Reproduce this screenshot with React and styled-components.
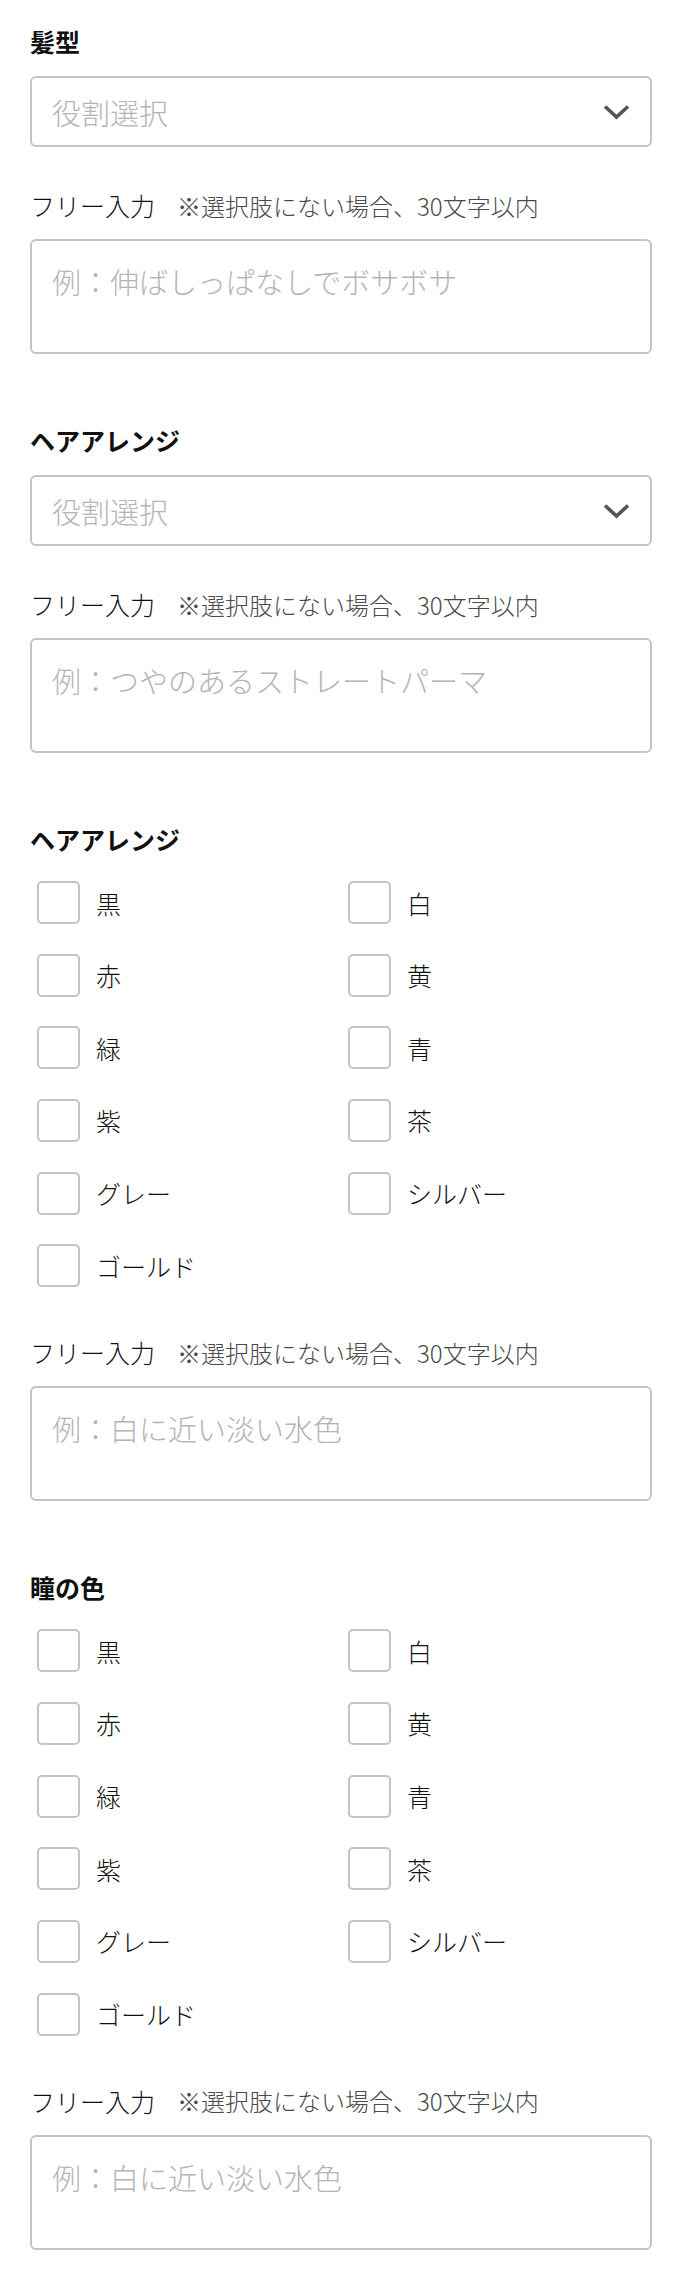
import React from "react";
import styled, { createGlobalStyle } from "styled-components";

const GlobalStyle = createGlobalStyle`
  html, body { margin: 0; padding: 0; background: #fff; }
  body {
    font-family: "Noto Sans CJK JP", "Noto Sans", sans-serif;
    color: #222;
  }
  * { box-sizing: border-box; }
`;

const Page = styled.div`
  width: 682px;
  padding: 23px 30px 29px;
  display: flex;
  flex-direction: column;
  gap: 68px;
`;

const Section = styled.section`
  display: flex;
  flex-direction: column;
`;

const Title = styled.h2`
  margin: 0;
  font-size: 25px;
  line-height: 36px;
  font-weight: 700;
  color: #111;
`;

const SelectButton = styled.button`
  margin-top: 17px;
  width: 100%;
  height: 71px;
  display: flex;
  align-items: center;
  justify-content: space-between;
  padding: 0 20px 0 20px;
  background: #fff;
  border: 2px solid #c4c4c4;
  border-radius: 6px;
  font-family: inherit;
  font-size: 29px;
  font-weight: 300;
  color: #b4b4b4;
  text-align: left;
  cursor: pointer;
`;

const LabelRow = styled.div`
  margin-top: ${(p) => p.$gap}px;
  display: flex;
  align-items: center;
  height: 36px;
  gap: 22px;
`;

const LabelMain = styled.span`
  font-size: 25px;
  font-weight: 300;
  color: #111;
`;

const LabelNote = styled.span`
  font-size: 24px;
  font-weight: 300;
  color: #4a4a4a;
`;

const TextArea = styled.textarea`
  margin-top: 16px;
  display: block;
  width: 100%;
  height: 115px;
  padding: 19px 20px;
  border: 2px solid #c4c4c4;
  border-radius: 6px;
  font-family: inherit;
  font-size: 29px;
  font-weight: 300;
  line-height: 42px;
  color: #222;
  resize: none;
  outline: none;
  &::placeholder {
    color: #b4b4b4;
  }
`;

const CheckGrid = styled.div`
  margin-top: 24px;
  display: grid;
  grid-template-columns: 1fr 1fr;
  row-gap: 29.67px;
`;

const CheckItem = styled.label`
  display: flex;
  align-items: center;
  gap: 16px;
  padding-left: 7px;
  height: 43px;
  font-size: 25px;
  font-weight: 300;
  color: #111;
  cursor: pointer;
`;

const CheckBox = styled.input.attrs({ type: "checkbox" })`
  appearance: none;
  margin: 0;
  width: 43px;
  height: 43px;
  flex: none;
  border: 2px solid #c4c4c4;
  border-radius: 5px;
  background: #fff;
`;

const Chevron = () => (
  <svg width="27" height="16" viewBox="0 0 27 16" aria-hidden="true">
    <polyline
      points="2,2.5 13.5,13 25,2.5"
      fill="none"
      stroke="#555"
      strokeWidth="3.6"
    />
  </svg>
);

const FreeInput = ({ gap, placeholder }) => (
  <>
    <LabelRow $gap={gap}>
      <LabelMain>フリー入力</LabelMain>
      <LabelNote>※選択肢にない場合、30文字以内</LabelNote>
    </LabelRow>
    <TextArea placeholder={placeholder} />
  </>
);

const colors = ["黒", "白", "赤", "黄", "緑", "青", "紫", "茶", "グレー", "シルバー", "ゴールド"];

const SelectSection = ({ title, placeholder }) => (
  <Section>
    <Title>{title}</Title>
    <SelectButton type="button">
      <span>役割選択</span>
      <Chevron />
    </SelectButton>
    <FreeInput gap={40} placeholder={placeholder} />
  </Section>
);

const CheckSection = ({ title, placeholder }) => (
  <Section>
    <Title>{title}</Title>
    <CheckGrid>
      {colors.map((c) => (
        <CheckItem key={c}>
          <CheckBox />
          <span>{c}</span>
        </CheckItem>
      ))}
    </CheckGrid>
    <FreeInput gap={47} placeholder={placeholder} />
  </Section>
);

export default function App() {
  return (
    <>
      <GlobalStyle />
      <Page>
        <SelectSection title="髪型" placeholder="例：伸ばしっぱなしでボサボサ" />
        <SelectSection title="ヘアアレンジ" placeholder="例：つやのあるストレートパーマ" />
        <CheckSection title="ヘアアレンジ" placeholder="例：白に近い淡い水色" />
        <CheckSection title="瞳の色" placeholder="例：白に近い淡い水色" />
      </Page>
    </>
  );
}
